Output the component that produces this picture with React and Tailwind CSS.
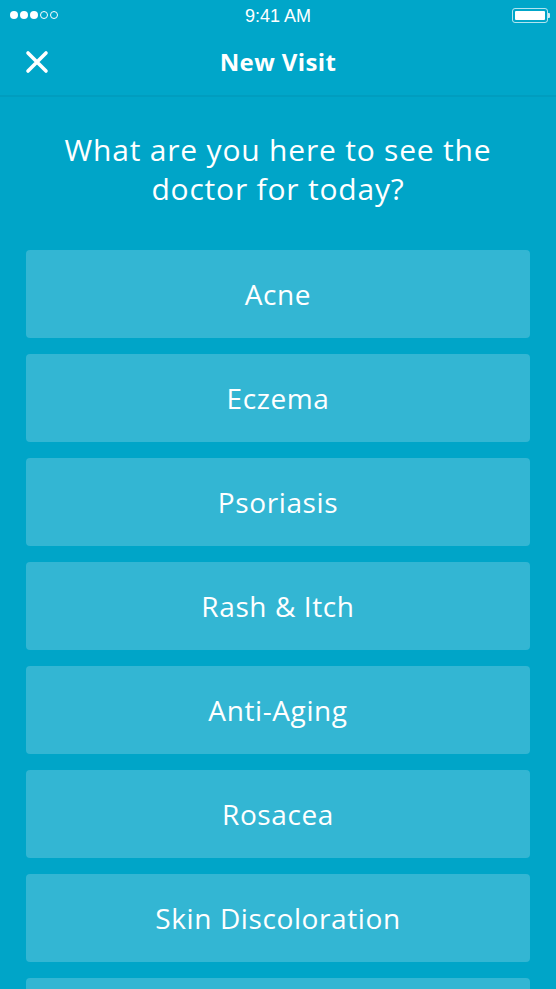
import React from 'react';

const reasons = ['Acne', 'Eczema', 'Psoriasis', 'Rash & Itch', 'Anti-Aging', 'Rosacea', 'Skin Discoloration', 'Hair Loss'];

function StatusBar() {
  return (
    <div className="relative h-[30px] flex items-center justify-center">
      <div className="absolute left-[10px] top-[11px] flex gap-[2px]">
        {[0, 1, 2].map((i) => (
          <span key={i} className="w-[8px] h-[8px] rounded-full bg-white" />
        ))}
        {[0, 1].map((i) => (
          <span key={i} className="w-[8px] h-[8px] rounded-full border border-white" />
        ))}
      </div>
      <span className="text-white text-[18px] leading-none mt-[2px]" style={{ fontFamily: '"Liberation Sans", Arial, sans-serif' }}>9:41 AM</span>
      <div className="absolute right-[6px] top-[8px] flex items-center">
        <div className="w-[36px] h-[15px] rounded-[3px] border border-white/70 p-[2px]">
          <div className="w-full h-full bg-white rounded-[1px]" />
        </div>
        <div className="w-[2px] h-[5px] bg-white/80 rounded-r-[1px]" />
      </div>
    </div>
  );
}

export default function App() {
  return (
    <div className="w-[556px] h-[989px] overflow-hidden bg-[#00a5c8]" style={{ fontFamily: '"Open Sans", Lato, sans-serif' }}>
      <div className="bg-[#00a6c9] border-b-[2px] border-[#009dbf]">
        <StatusBar />
        <div className="relative h-[65px] flex items-center justify-center">
          <button aria-label="Close" className="absolute left-[25px] top-[20px] text-white">
            <svg width="24" height="24" viewBox="0 0 24 24" fill="none" stroke="currentColor" strokeWidth="3.6" strokeLinecap="round">
              <path d="M3 3 L21 21 M21 3 L3 21" />
            </svg>
          </button>
          <h1 className="text-white text-[24px] font-bold tracking-[0.4px] -mt-[2px]">New Visit</h1>
        </div>
      </div>

      <p className="text-white text-center text-[30px] leading-[39px] tracking-[0.8px] px-[20px] pt-[33px] mb-[42px]">
        What are you here to see the<br />doctor for today?
      </p>

      <div className="flex flex-col gap-[16px] px-[26px]">
        {reasons.map((r) => (
          <button
            key={r}
            className="h-[88px] w-full rounded-[4px] bg-[#33b6d3] text-white text-[28px] tracking-[0.6px] flex items-center justify-center"
          >
            {r}
          </button>
        ))}
      </div>
    </div>
  );
}
